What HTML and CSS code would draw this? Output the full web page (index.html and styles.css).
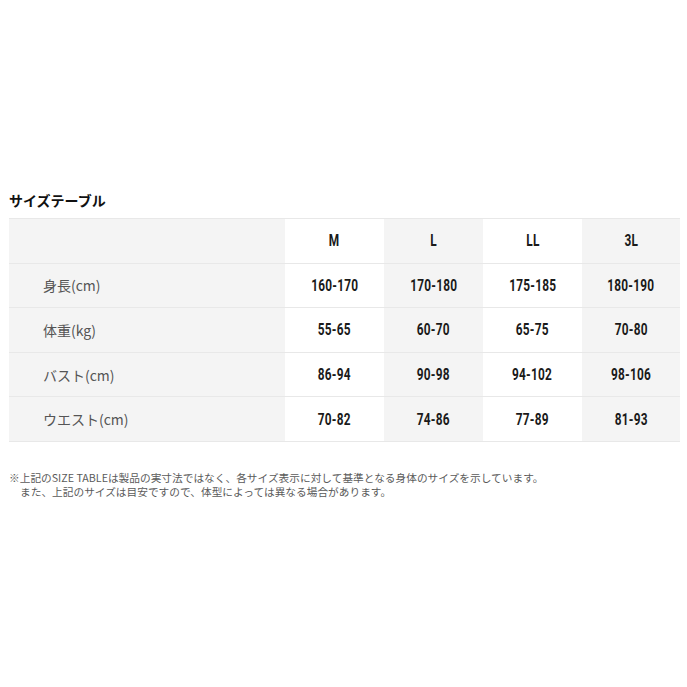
FILE: index.html
```html
<!DOCTYPE html>
<html lang="ja">
<head>
<meta charset="utf-8">
<link rel="stylesheet" href="styles.css">
</head>
<body>
<div class="page">
  <h2 class="title">サイズテーブル</h2>
  <div class="table">
    <div class="row head">
      <div class="cell label"></div>
      <div class="cell w"><span class="num">M</span></div>
      <div class="cell g"><span class="num">L</span></div>
      <div class="cell w"><span class="num">LL</span></div>
      <div class="cell g"><span class="num">3L</span></div>
    </div>
    <div class="row">
      <div class="cell label">身長(cm)</div>
      <div class="cell w"><span class="num">160-170</span></div>
      <div class="cell g"><span class="num">170-180</span></div>
      <div class="cell w"><span class="num">175-185</span></div>
      <div class="cell g"><span class="num">180-190</span></div>
    </div>
    <div class="row">
      <div class="cell label">体重(kg)</div>
      <div class="cell w"><span class="num">55-65</span></div>
      <div class="cell g"><span class="num">60-70</span></div>
      <div class="cell w"><span class="num">65-75</span></div>
      <div class="cell g"><span class="num">70-80</span></div>
    </div>
    <div class="row">
      <div class="cell label">バスト(cm)</div>
      <div class="cell w"><span class="num">86-94</span></div>
      <div class="cell g"><span class="num">90-98</span></div>
      <div class="cell w"><span class="num">94-102</span></div>
      <div class="cell g"><span class="num">98-106</span></div>
    </div>
    <div class="row">
      <div class="cell label">ウエスト(cm)</div>
      <div class="cell w"><span class="num">70-82</span></div>
      <div class="cell g"><span class="num">74-86</span></div>
      <div class="cell w"><span class="num">77-89</span></div>
      <div class="cell g"><span class="num">81-93</span></div>
    </div>
  </div>
  <p class="note">※上記のSIZE TABLEは製品の実寸法ではなく、各サイズ表示に対して基準となる身体のサイズを示しています。<br><span class="indent">また、上記のサイズは目安ですので、体型によっては異なる場合があります。</span></p>
</div>
</body>
</html>
```
FILE: styles.css
```css
html, body {
  margin: 0;
  padding: 0;
  background: #ffffff;
}
.page {
  padding: 190px 7px 0 9px;
  font-family: "Noto Sans CJK JP", "Noto Sans", sans-serif;
  color: #222;
}
.title {
  margin: 0 0 8px 0;
  font-size: 14px;
  line-height: 20px;
  font-weight: 700;
  color: #111;
}
.table {
  width: 671px;
  border-top: 1px solid #e8e8e8;
}
.row {
  display: grid;
  grid-template-columns: 276px 99px 99px 99px 98px;
  height: 44.6px;
  box-sizing: border-box;
  border-bottom: 1px solid #e8e8e8;
}
.cell {
  display: flex;
  align-items: center;
  justify-content: center;
  font-family: "Roboto", "Liberation Sans", sans-serif;
  font-weight: 700;
  font-size: 16px;
  color: #1a1a1a;
}
.num {
  display: inline-block;
  transform: scaleX(0.74);
  letter-spacing: 0.3px;
}
.cell.w { background: #ffffff; }
.cell.g { background: #f4f4f4; }
.cell.label {
  background: #f4f4f4;
  justify-content: flex-start;
  padding-left: 34px;
  font-family: "Noto Sans CJK JP", "Noto Sans", sans-serif;
  font-weight: 400;
  font-size: 14px;
  color: #555;
}
.note {
  margin: 29px 0 0 0;
  font-size: 10.7px;
  line-height: 14px;
  color: #5a5a5a;
}
.indent {
  padding-left: 11px;
}
```
